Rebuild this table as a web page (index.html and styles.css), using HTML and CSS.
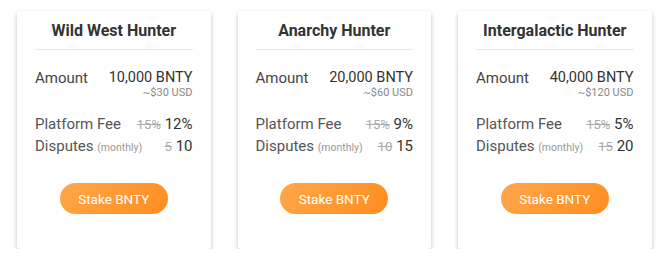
FILE: index.html
```html
<!DOCTYPE html>
<html lang="en">
<head>
    <meta charset="UTF-8">
    <title>Stake BNTY</title>
    <link rel="stylesheet" href="styles.css">
</head>
<body>
    <div class="plans">
        <div class="card">
            <h2>Wild West Hunter</h2>
            <div class="amount">
                <span class="label">Amount</span>
                <div class="value">
                    <div class="bnty">10,000 BNTY</div>
                    <div class="usd">~$30 USD</div>
                </div>
            </div>
            <div class="row">
                <span>Platform Fee</span>
                <span><s>15%</s> 12%</span>
            </div>
            <div class="row">
                <span>Disputes <small>(monthly)</small></span>
                <span><s>5</s> 10</span>
            </div>
            <button>Stake BNTY</button>
        </div>
        <div class="card">
            <h2>Anarchy Hunter</h2>
            <div class="amount">
                <span class="label">Amount</span>
                <div class="value">
                    <div class="bnty">20,000 BNTY</div>
                    <div class="usd">~$60 USD</div>
                </div>
            </div>
            <div class="row">
                <span>Platform Fee</span>
                <span><s>15%</s> 9%</span>
            </div>
            <div class="row">
                <span>Disputes <small>(monthly)</small></span>
                <span><s>10</s> 15</span>
            </div>
            <button>Stake BNTY</button>
        </div>
        <div class="card">
            <h2>Intergalactic Hunter</h2>
            <div class="amount">
                <span class="label">Amount</span>
                <div class="value">
                    <div class="bnty">40,000 BNTY</div>
                    <div class="usd">~$120 USD</div>
                </div>
            </div>
            <div class="row">
                <span>Platform Fee</span>
                <span><s>15%</s> 5%</span>
            </div>
            <div class="row">
                <span>Disputes <small>(monthly)</small></span>
                <span><s>15</s> 20</span>
            </div>
            <button>Stake BNTY</button>
        </div>
    </div>
</body>
</html>
```

FILE: styles.css
```css
body {
    margin: 0;
    background: #fff;
    font-family: Roboto, "Liberation Sans", sans-serif;
    color: #444;
}
.plans {
    display: flex;
    gap: 27px;
    padding: 11px 0 0 17px;
}
.card {
    width: 193.5px;
    height: 238px;
    box-sizing: border-box;
    padding: 0 18px;
    background: #fff;
    border-radius: 3px;
    box-shadow: 0 2px 4px rgba(0,0,0,0.25);
    display: flex;
    flex-direction: column;
}
.card h2 {
    margin: 0;
    padding: 10px 0 8px;
    font-size: 16px;
    line-height: 20px;
    font-weight: 700;
    color: #333;
    text-align: center;
    border-bottom: 1px solid #e8e8e8;
}
.amount {
    display: flex;
    justify-content: space-between;
    margin-top: 19px;
    font-size: 15px;
    line-height: 18px;
}
.amount .label {
    color: #444;
}
.value {
    text-align: right;
    color: #333;
}
.bnty {
    font-size: 14.5px;
}
.usd {
    font-size: 11px;
    line-height: 12px;
    color: #888;
}
.row {
    display: flex;
    justify-content: space-between;
    font-size: 15px;
    color: #555;
    line-height: 22px;
}
.amount + .row {
    margin-top: 14px;
}
.row small {
    font-size: 10.5px;
    line-height: 1;
    color: #999;
}
.row s {
    color: #aaa;
    font-size: 13px;
    line-height: 1;
}
.row span:last-child {
    color: #333;
}
button {
    align-self: center;
    margin-top: 26px;
    width: 108px;
    height: 31px;
    border: none;
    border-radius: 16px;
    background: linear-gradient(135deg, #ffa84c, #ff8c1e);
    color: #fff;
    font-family: inherit;
    font-size: 13.5px;
    cursor: pointer;
}
```
